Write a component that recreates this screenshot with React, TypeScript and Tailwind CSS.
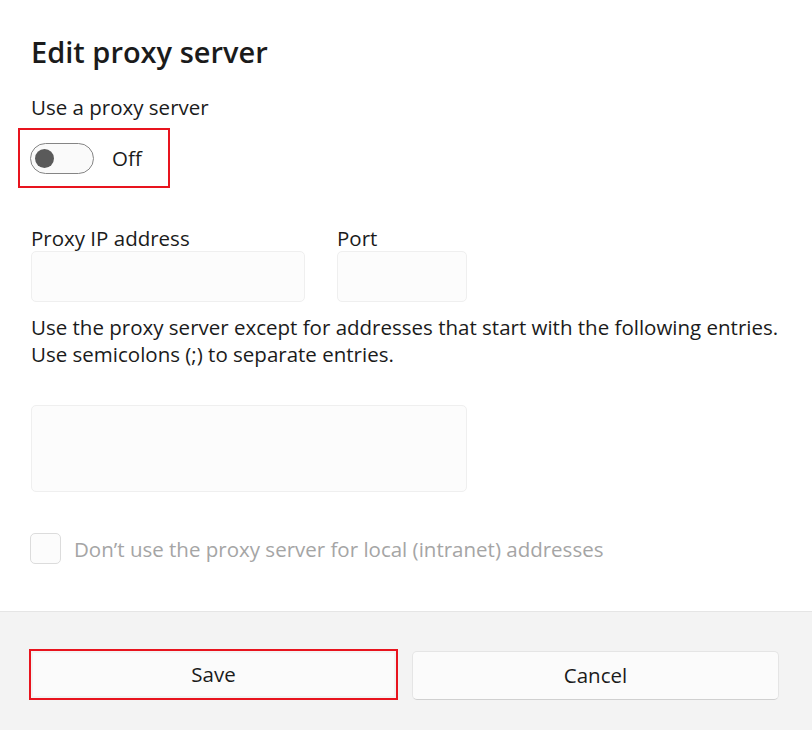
import React from 'react';

const font = { fontFamily: '"Segoe UI", "Open Sans", "Noto Sans", sans-serif' };

export default function App() {
  return (
    <div className="w-[812px] h-[730px] bg-white flex flex-col text-[#1b1b1b]" style={font}>
      <div className="flex-1 pl-[31px] pt-[30px]">
        <h1 className="text-[29px] leading-[44px] font-semibold">Edit proxy server</h1>

        <div className="mt-[20px] text-[20.5px] leading-[26px]">Use a proxy server</div>

        {/* toggle */}
        <div className="mt-[8px] -ml-[13px] w-[152px] h-[60px] border-2 border-[#e8141e] flex items-center pl-[10px] gap-[18px]">
          <div className="w-[64px] h-[31px] rounded-full border-[1.5px] border-[#858585] bg-[#fafafa] flex items-center pl-[4px]">
            <div className="w-[19px] h-[19px] rounded-full bg-[#5a5a5a]" />
          </div>
          <span className="text-[20.5px] leading-[26px]">Off</span>
        </div>

        <div className="mt-[37px] flex gap-[32px]">
          <div className="flex flex-col">
            <label className="text-[20.5px] leading-[26px]">Proxy IP address</label>
            <div className="w-[274px] h-[51px] rounded-[5px] border border-[#efefef] bg-[#fcfcfc]" />
          </div>
          <div className="flex flex-col">
            <label className="text-[20.5px] leading-[26px]">Port</label>
            <div className="w-[130px] h-[51px] rounded-[5px] border border-[#efefef] bg-[#fcfcfc]" />
          </div>
        </div>

        <p className="mt-[12px] text-[20.5px] leading-[27px] whitespace-nowrap">
          Use the proxy server except for addresses that start with the following entries.
          <br />
          Use semicolons (;) to separate entries.
        </p>
        <div className="mt-[37px] w-[436px] h-[87px] rounded-[5px] border border-[#efefef] bg-[#fcfcfc]" />

        <div className="mt-[41px] flex items-center gap-[13px] -ml-px">
          <div className="w-[31px] h-[31px] rounded-[5px] border border-[#dcdcdc] bg-[#fcfcfc]" />
          <span className="text-[20.5px] leading-[26px] text-[#a5a5a5]">Don’t use the proxy server for local (intranet) addresses</span>
        </div>
      </div>

      <div className="h-[119px] bg-[#f3f3f3] border-t border-[#e5e5e5] flex items-start pt-[37px] pl-[29px] gap-[14px]">
        <div className="w-[369px] h-[51px] border-2 border-[#e8141e] p-[2px]">
          <button className="w-full h-full bg-[#fbfbfb] text-[20.5px] flex items-center justify-center">Save</button>
        </div>
        <button className="mt-[2px] w-[367px] h-[49px] rounded-[5px] bg-[#fbfbfb] border border-[#e5e5e5] border-b-[#d0d0d0] text-[20.5px] flex items-center justify-center">
          Cancel
        </button>
      </div>
    </div>
  );
}
